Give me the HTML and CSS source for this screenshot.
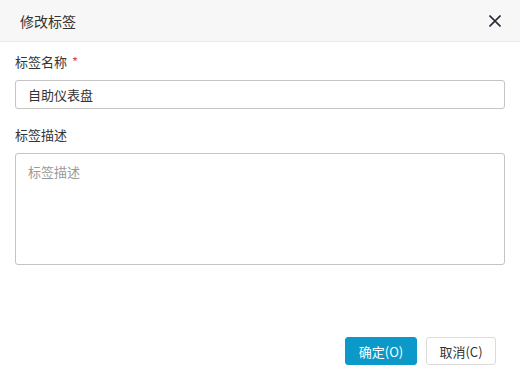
FILE: index.html
```html
<!DOCTYPE html>
<html lang="zh-CN">
<head>
<meta charset="utf-8">
<link rel="stylesheet" href="styles.css">
</head>
<body>
<div class="dialog">
  <div class="header">
    <span class="title">修改标签</span>
    <svg class="close" width="12" height="12" viewBox="0 0 12 12"><path d="M0.5 0.5 L11.5 11.5 M11.5 0.5 L0.5 11.5" stroke="#2b2b35" stroke-width="1.6" fill="none"/></svg>
  </div>
  <div class="body">
    <div class="label">标签名称 <span class="req">*</span></div>
    <div class="input">自助仪表盘</div>
    <div class="label label2">标签描述</div>
    <div class="textarea"><span class="placeholder">标签描述</span></div>
  </div>
  <div class="footer">
    <button class="btn primary">确定(O)</button>
    <button class="btn">取消(C)</button>
  </div>
</div>
</body>
</html>
```
FILE: styles.css
```css
html, body { margin: 0; padding: 0; background: #fff; }
body { font-family: "Noto Sans CJK SC", "Noto Sans", sans-serif; font-size: 13px; color: #333; }
.dialog { width: 520px; height: 380px; display: flex; flex-direction: column; box-sizing: border-box; }
.header { height: 42px; box-sizing: border-box; background: #f7f7f7; border-bottom: 1px solid #e9e9e9; display: flex; align-items: center; justify-content: space-between; padding: 0 19px 0 20px; }
.title { font-size: 14px; color: #333; }
.close { display: block; }
.body { padding: 0 15px 0 15px; flex: 1; }
.label { margin-top: 11px; height: 18px; line-height: 18px; font-size: 13px; color: #333; }
.label2 { margin-top: 17px; }
.req { color: #e84646; margin-left: 2px; }
.input { margin-top: 9px; height: 29px; box-sizing: border-box; border: 1px solid #c4c4c4; border-radius: 3px; padding: 0 12px; line-height: 27px; font-size: 13px; color: #333; }
.textarea { margin-top: 9px; height: 112px; box-sizing: border-box; border: 1px solid #c4c4c4; border-radius: 3px; padding: 8px 12px; line-height: 20px; }
.placeholder { color: #999; }
.footer { display: flex; justify-content: flex-end; gap: 9px; padding: 0 24px 15px 0; }
.btn { font-family: inherit; font-size: 13px; height: 28px; padding: 0; box-sizing: border-box; border-radius: 3px; border: 1px solid #dcdcdc; background: #fff; color: #333; width: 70px; cursor: pointer; }
.btn.primary { width: 72px; background: #0a99c8; border-color: #0a99c8; color: #fff; }
```
